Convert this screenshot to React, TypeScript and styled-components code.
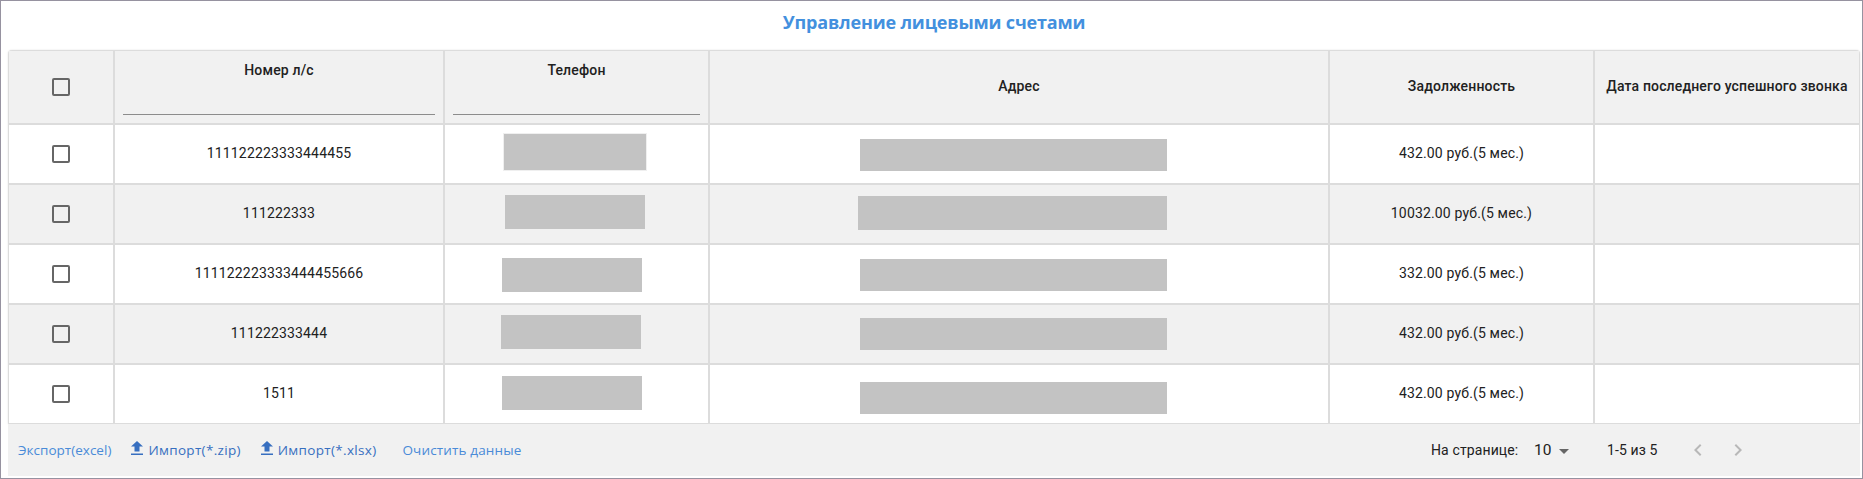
import React from "react";
import styled, { createGlobalStyle } from "styled-components";

const GlobalStyle = createGlobalStyle`
  *, *::before, *::after { box-sizing: border-box; }
  body { margin: 0; background: #fff; }
`;

const line = "#dcdcdc";
const stripe = "#f1f1f1";

const Page = styled.main`
  width: 1863px;
  height: 479px;
  border: 1px solid #9692a0;
  padding: 0 2px 0 7px;
  background: #fff;
  color: #212121;
  font: 14px/20px Roboto, "Liberation Sans", sans-serif;
`;

const Title = styled.h1`
  margin: 0;
  height: 49px;
  padding-top: 9px;
  text-align: center;
  color: #4390de;
  font: 700 18px/24px "Open Sans", "Noto Sans", sans-serif;
  letter-spacing: -0.18px;
`;

const Table = styled.section`
  width: 1852px;
  border-radius: 4px 4px 0 0;
  overflow: hidden;
  box-shadow: 0 0 2px rgba(0, 0, 0, 0.12);
`;

const Row = styled.div<{ $head?: boolean; $striped?: boolean }>`
  display: grid;
  grid-template-columns: 106px 330px 265px 620px 265px 266px;
  height: ${(p) => (p.$head ? 74 : 60)}px;
  background: ${(p) => (p.$striped ? stripe : "#fff")};
  font-weight: ${(p) => (p.$head ? 500 : 400)};
  letter-spacing: ${(p) => (p.$head ? 0.16 : 0.16)}px;
`;

const Cell = styled.div`
  display: flex;
  align-items: center;
  justify-content: center;
  border: 1px solid ${line};
  white-space: nowrap;
`;

const TextCell = styled(Cell)`
  padding-bottom: 2px;
`;

const MaskCell = styled(Cell)`
  align-items: flex-start;
  justify-content: flex-start;
`;

const FilterCell = styled(Cell)`
  flex-direction: column;
  align-items: stretch;
  justify-content: flex-start;
  padding: 9px 8px 0;
  text-align: center;
`;

const FilterInput = styled.div`
  height: 35px;
  border-bottom: 1px solid #8c8c8c;
`;

const Checkbox = styled.span`
  width: 18px;
  height: 18px;
  border: 2px solid #666;
  border-radius: 2px;
`;

type Box = [left: number, top: number, width: number, height: number];

const Mask = styled.span<{ $box: Box; $ringed?: boolean }>`
  margin: ${(p) => p.$box[1]}px 0 0 ${(p) => p.$box[0]}px;
  width: ${(p) => p.$box[2]}px;
  height: ${(p) => p.$box[3]}px;
  background: #c3c3c3;
  box-shadow: ${(p) => (p.$ringed ? "0 0 0 1px #efefef" : "none")};
`;

const Footer = styled.footer`
  display: flex;
  width: 1852px;
  height: 52px;
  padding: 0 0 0 10px;
  align-items: center;
  background: ${stripe};
`;

const Link = styled.a<{ $gap?: number; $dark?: boolean; $track?: number }>`
  display: flex;
  align-items: center;
  margin-left: ${(p) => p.$gap ?? 0}px;
  color: ${(p) => (p.$dark ? "#376fc0" : "#4a8bd8")};
  font: 13.5px/20px "Open Sans", "Noto Sans", sans-serif;
  letter-spacing: ${(p) => p.$track ?? 0.15}px;
  white-space: nowrap;
`;

const UploadSvg = styled.svg`
  width: 12px;
  height: 14px;
  margin: -4px 5px 0 0;
  fill: #376fc0;
`;

const Pager = styled.div`
  display: flex;
  align-items: center;
  margin-left: auto;
  width: 429px;
  letter-spacing: 0.12px;
`;

const PageLabel = styled.span`
  width: 103px;
`;

const PageSize = styled.span`
  display: flex;
  align-items: center;
  width: 73px;
  font-size: 15.5px;
  gap: 7px;
`;

const Caret = styled.span`
  margin-top: 2px;
  border: 5px solid transparent;
  border-top-color: #666;
  border-bottom: 0;
`;

const Range = styled.span`
  width: 79px;
`;

const ArrowSvg = styled.svg`
  width: 24px;
  height: 24px;
  margin-right: 16px;
  fill: #b8b8b8;
`;

const Upload = () => (
  <UploadSvg viewBox="0 0 12 14">
    <path d="M3.5 10.5h5V5.5H12L6 0 0 5.5h3.5zM0 12.4h12V14H0z" />
  </UploadSvg>
);

interface Account {
  id: string;
  debt: string;
  phone: Box;
  address: Box;
}

const accounts: Account[] = [
  { id: "111122223333444455", debt: "432.00 руб.(5 мес.)", phone: [59, 9, 142, 36], address: [150, 14, 307, 32] },
  { id: "111222333", debt: "10032.00 руб.(5 мес.)", phone: [60, 10, 140, 34], address: [148, 11, 309, 34] },
  { id: "111122223333444455666", debt: "332.00 руб.(5 мес.)", phone: [57, 13, 140, 34], address: [150, 14, 307, 32] },
  { id: "111222333444", debt: "432.00 руб.(5 мес.)", phone: [56, 10, 140, 34], address: [150, 13, 307, 32] },
  { id: "1511", debt: "432.00 руб.(5 мес.)", phone: [57, 11, 140, 34], address: [150, 17, 307, 32] },
];

export default function App() {
  return (
    <>
      <GlobalStyle />
      <Page>
        <Title>Управление лицевыми счетами</Title>
        <Table>
          <Row $head $striped>
            <Cell><Checkbox /></Cell>
            <FilterCell>Номер л/с<FilterInput /></FilterCell>
            <FilterCell>Телефон<FilterInput /></FilterCell>
            <TextCell>Адрес</TextCell>
            <TextCell>Задолженность</TextCell>
            <TextCell>Дата последнего успешного звонка</TextCell>
          </Row>
          {accounts.map((a, i) => (
            <Row key={a.id} $striped={i % 2 === 1}>
              <Cell><Checkbox /></Cell>
              <TextCell>{a.id}</TextCell>
              <MaskCell><Mask $box={a.phone} $ringed={i === 0} /></MaskCell>
              <MaskCell><Mask $box={a.address} /></MaskCell>
              <TextCell>{a.debt}</TextCell>
              <Cell />
            </Row>
          ))}
        </Table>
        <Footer>
          <Link $track={0.02}>Экспорт(excel)</Link>
          <Link $gap={20} $dark $track={0.32}><Upload />Импорт(*.zip)</Link>
          <Link $gap={20} $dark $track={0.32}><Upload />Импорт(*.xlsx)</Link>
          <Link $gap={26}>Очистить данные</Link>
          <Pager>
            <PageLabel>На странице:</PageLabel>
            <PageSize>10<Caret /></PageSize>
            <Range>1-5 из 5</Range>
            <ArrowSvg viewBox="0 0 24 24"><path d="M15.41 7.41L14 6l-6 6 6 6 1.41-1.41L10.83 12z" /></ArrowSvg>
            <ArrowSvg viewBox="0 0 24 24"><path d="M10 6L8.59 7.41 13.17 12l-4.58 4.59L10 18l6-6z" /></ArrowSvg>
          </Pager>
        </Footer>
      </Page>
    </>
  );
}
